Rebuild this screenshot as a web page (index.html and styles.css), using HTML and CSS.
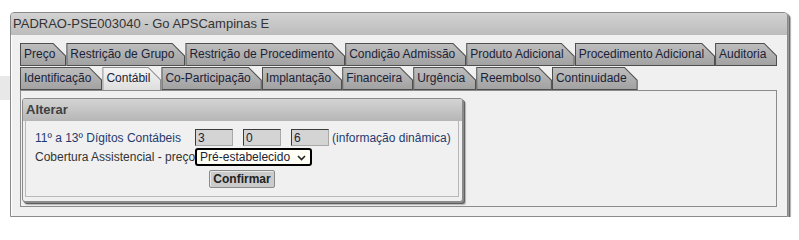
FILE: index.html
```html
<!DOCTYPE html>
<html lang="pt-BR">
<head>
<meta charset="utf-8">
<title>PADRAO-PSE003040</title>
<link rel="stylesheet" href="styles.css">
</head>
<body>
<div class="bgblock"></div>
<div class="page">
  <div class="window">
    <div class="title">PADRAO-PSE003040 - Go APSCampinas E</div>
    <div class="wbody">
      <div class="tabrow">
        <span class="tab"><span class="tab-in">Preço</span></span>
        <span class="tab"><span class="tab-in">Restrição de Grupo</span></span>
        <span class="tab"><span class="tab-in">Restrição de Procedimento</span></span>
        <span class="tab"><span class="tab-in">Condição Admissão</span></span>
        <span class="tab"><span class="tab-in">Produto Adicional</span></span>
        <span class="tab"><span class="tab-in">Procedimento Adicional</span></span>
        <span class="tab"><span class="tab-in">Auditoria</span></span>
      </div>
      <div class="tabrow second">
        <span class="tab"><span class="tab-in">Identificação</span></span>
        <span class="tab active"><span class="tab-in">Contábil</span></span>
        <span class="tab"><span class="tab-in">Co-Participação</span></span>
        <span class="tab"><span class="tab-in">Implantação</span></span>
        <span class="tab"><span class="tab-in">Financeira</span></span>
        <span class="tab"><span class="tab-in">Urgência</span></span>
        <span class="tab"><span class="tab-in">Reembolso</span></span>
        <span class="tab"><span class="tab-in">Continuidade</span></span>
      </div>
      <div class="panel">
        <div class="box">
          <div class="box-head">Alterar</div>
          <div class="box-body">
            <div class="form">
              <span class="lbl blue">11º a 13º Dígitos Contábeis</span>
              <div class="fields">
                <input class="fld" type="text" value="3">
                <input class="fld" type="text" value="0">
                <input class="fld" type="text" value="6">
                <span class="info">(informação dinâmica)</span>
              </div>
              <span class="lbl">Cobertura Assistencial - preço</span>
              <div class="selwrap">
                <select class="sel"><option>Pré-estabelecido</option></select>
                <svg class="chev" width="9" height="6" viewBox="0 0 9 6"><polyline points="1,1 4.5,4.5 8,1" fill="none" stroke="#222" stroke-width="1.6"/></svg>
              </div>
            </div>
            <div class="actions"><button class="btn" type="button">Confirmar</button></div>
          </div>
        </div>
      </div>
    </div>
  </div>
</div>
</body>
</html>
```
FILE: styles.css
```css
html, body {
  margin: 0;
  padding: 0;
  background: #ffffff;
}
body {
  font-family: "Liberation Sans", Arial, sans-serif;
  font-size: 12px;
  color: #333;
  position: relative;
}
.bgblock {
  position: absolute;
  left: 0;
  top: 76px;
  width: 10px;
  height: 24px;
  background: #e8e8e8;
}
.page {
  padding: 12px 0 0 10px;
}
.window {
  width: 778px;
  box-sizing: border-box;
  border: 1px solid #8a8a8a;
  border-radius: 4px 4px 0 0;
  background: #f0f0f0;
  box-shadow: 1px 1px 0 #9a9a9a, 2px 2px 0 #6a6a6a, 3px 3px 1px #b0b0b0;
}
.title {
  height: 22px;
  line-height: 22px;
  padding-left: 2px;
  font-size: 13px;
  color: #333;
  background: linear-gradient(#d2d2d2, #bcbcbc);
  border-radius: 3px 3px 0 0;
}
.wbody {
  padding: 8px 10px 9px 9px;
  box-shadow: inset 1px 0 0 #ffffff;
}
.tabrow {
  display: flex;
  height: 23px;
}
.tabrow.second {
  margin-top: 1px;
}
.tab {
  display: block;
  height: 23px;
  box-sizing: border-box;
  padding: 1px;
  background: #4e4e4e;
  clip-path: polygon(0 0, calc(100% - 13px) 0, 100% 13px, 100% 100%, 0 100%);
}
.tab-in {
  display: block;
  height: 21px;
  line-height: 21px;
  padding: 0 10px 0 3px;
  white-space: nowrap;
  font-size: 12px;
  color: #1b2238;
  background: linear-gradient(#bdbdbd, #a2a2a2);
  clip-path: polygon(0 0, calc(100% - 12.4px) 0, 100% 12.4px, 100% 100%, 0 100%);
}
.tab.active {
  background: #8e8e8e;
  padding-bottom: 0;
}
.tab.active .tab-in {
  height: 22px;
  background: linear-gradient(#f4f4f4, #dedede);
}
.panel {
  border: 1px solid #8c8c8c;
  background: #f0f0f0;
  padding: 7px 0 4px 1px;
}
.box {
  width: 441px;
  box-sizing: border-box;
  border: 1px solid #8a8a8a;
  border-radius: 3px;
  background: #f0f0f0;
  box-shadow: 1px 1px 0 #8a8a8a, 2px 2px 0 #606060, 3px 3px 1px #b4b4b4;
}
.box-head {
  height: 22px;
  line-height: 22px;
  padding-left: 3px;
  font-size: 13px;
  font-weight: bold;
  color: #404040;
  background: linear-gradient(#d4d4d4, #b6b6b6);
  border-radius: 2px 2px 0 0;
}
.box-body {
  margin: 0 3px 4px 2px;
  border: 1px solid #b8b8b8;
  border-top: none;
  padding: 8px 9px 8px 9px;
}
.form {
  display: grid;
  grid-template-columns: auto auto;
  justify-content: start;
  align-items: center;
  column-gap: 0;
  row-gap: 2px;
}
.lbl {
  font-size: 12px;
  color: #333;
  white-space: nowrap;
}
.lbl.blue, .info {
  color: #1f3b6f;
}
.fields {
  display: flex;
  align-items: center;
  gap: 10px;
}
.fld {
  width: 38px;
  height: 17px;
  box-sizing: border-box;
  margin: 0;
  padding: 0 2px;
  font-family: "Liberation Sans", Arial, sans-serif;
  font-size: 12px;
  color: #1b2238;
  background: #d4d4d4;
  border: 1px solid;
  border-color: #3c3c3c #a8a8a8 #a8a8a8 #3c3c3c;
}
.info {
  margin-left: -7px;
  font-size: 12px;
  white-space: nowrap;
}
.selwrap {
  position: relative;
  width: 117px;
  height: 18px;
}
.sel {
  appearance: none;
  -webkit-appearance: none;
  width: 117px;
  height: 18px;
  box-sizing: border-box;
  margin: 0;
  padding: 0 0 0 3px;
  font-family: "Liberation Sans", Arial, sans-serif;
  font-size: 12px;
  color: #1b2238;
  background: #fffff6;
  border: 2px solid #000;
  border-radius: 3px;
  outline: none;
}
.chev {
  position: absolute;
  right: 6px;
  top: 7px;
}
.actions {
  text-align: center;
  margin-top: 4px;
}
.btn {
  height: 18px;
  box-sizing: border-box;
  margin: 0;
  padding: 0 3px;
  font-family: "Liberation Sans", Arial, sans-serif;
  font-size: 12px;
  font-weight: bold;
  color: #222;
  background: #cbcbcb;
  border: 1px solid #8a8a8a;
  border-radius: 2px;
  box-shadow: inset 1px 1px 0 #e8e8e8;
}
```
